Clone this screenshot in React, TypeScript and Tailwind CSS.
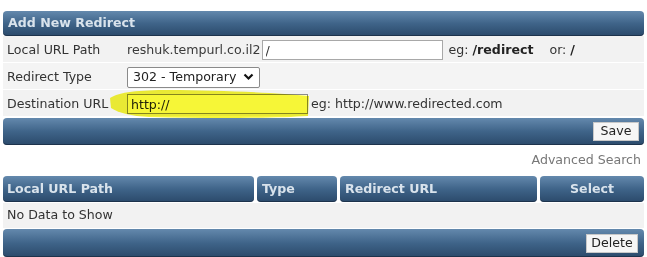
import React from "react";

const bar =
  "rounded-[4px] bg-gradient-to-b from-[#6489ad] via-[#3f6489] to-[#2b4a6b] shadow-[inset_0_-1px_0_rgba(20,35,55,0.6)]";

function Row({ label, children, shade = "bg-[#f2f2f2]" }: { label: string; children: React.ReactNode; shade?: string }) {
  return (
    <div className={`flex h-[27px] items-center border-b border-white pt-[2px] ${shade}`}>
      <div className="w-[124px] shrink-0 pl-[4px]">{label}</div>
      <div className="flex items-center">{children}</div>
    </div>
  );
}

function Highlight() {
  // highlighter marker stroke over the destination field
  return (
    <svg
      className="pointer-events-none absolute left-[109px] top-[89px] mix-blend-multiply"
      width="203"
      height="32"
      viewBox="0 0 203 32"
    >
      <path
        d="M1 9 C 10 3, 30 1, 60 1 C 110 1, 168 4, 200 7 L 199 27 C 168 29, 110 30, 40 28 C 22 27, 10 24, 2 19 Z"
        fill="#f5f52c"
        opacity="0.95"
      />
    </svg>
  );
}

export default function App() {
  return (
    <div className="relative h-[257px] w-[647px] overflow-hidden bg-white px-[3px] pt-[11px] font-['DejaVu_Sans',Verdana,sans-serif] text-[12.6px] text-[#333]">
      <div className={`${bar} flex h-[25px] items-center pl-[5px] text-[12.6px] font-bold text-[#d9e3ec]`}>
        Add New Redirect
      </div>

      <Row label="Local URL Path">
        <span className="text-[#3a3a3a]">reshuk.tempurl.co.il2</span>
        <input
          readOnly
          value="/"
          className="ml-px h-[20px] w-[181px] border border-[#a8a8a8] bg-white px-[3px] text-[12.6px] outline-none"
        />
        <span className="ml-[6px]">
          eg: <b className="text-[#222]">/redirect</b>
        </span>
        <span className="ml-[16px]">
          or: <b className="text-[#222]">/</b>
        </span>
      </Row>

      <Row label="Redirect Type" shade="bg-[#f4f4f4]">
        <div className="flex h-[21px] w-[133px] items-center justify-between rounded-[2px] border border-[#8a8a8a] bg-white pl-[5px] pr-[5px] text-[12.6px] text-[#222]">
          <span>302 - Temporary</span>
          <svg width="11" height="8" viewBox="0 0 11 8">
            <path d="M1.5 1.5 L5.5 5.5 L9.5 1.5" fill="none" stroke="#111" strokeWidth="2.2" />
          </svg>
        </div>
      </Row>

      <Row label="Destination URL">
        <input
          readOnly
          value="http://"
          className="h-[20px] w-[181px] border border-[#8a8a8a] bg-white px-[3px] text-[12.6px] text-[#222] outline-none"
        />
        <span className="ml-[3px]">eg: http://www.redirected.com</span>
      </Row>

      <div className={`${bar} mt-px flex h-[27px] items-center justify-end pr-[5px]`}>
        <button className="h-[19px] w-[46px] border border-[#c8c8c8] bg-[#f6f6f6] text-[12.6px] leading-none text-[#222]">
          Save
        </button>
      </div>

      <div className="flex h-[31px] items-center justify-end pr-[3px] text-[#777]">Advanced Search</div>

      <div className="flex h-[26px] gap-[3px] text-[12.6px] font-bold text-[#d9e3ec]">
        <div className={`${bar} flex w-[251px] items-center pl-[4px]`}>Local URL Path</div>
        <div className={`${bar} flex w-[80px] items-center pl-[5px]`}>Type</div>
        <div className={`${bar} flex w-[197px] items-center pl-[5px]`}>Redirect URL</div>
        <div className={`${bar} flex flex-1 items-center justify-center`}>Select</div>
      </div>

      <div className="mt-px flex h-[26px] items-center border-b border-white bg-[#f2f2f2] pl-[4px]">No Data to Show</div>

      <div className={`${bar} flex h-[28px] items-center justify-end pr-[6px]`}>
        <button className="h-[19px] w-[52px] border border-[#c8c8c8] bg-[#f6f6f6] text-[12.6px] leading-none text-[#222]">
          Delete
        </button>
      </div>

      <Highlight />
    </div>
  );
}
